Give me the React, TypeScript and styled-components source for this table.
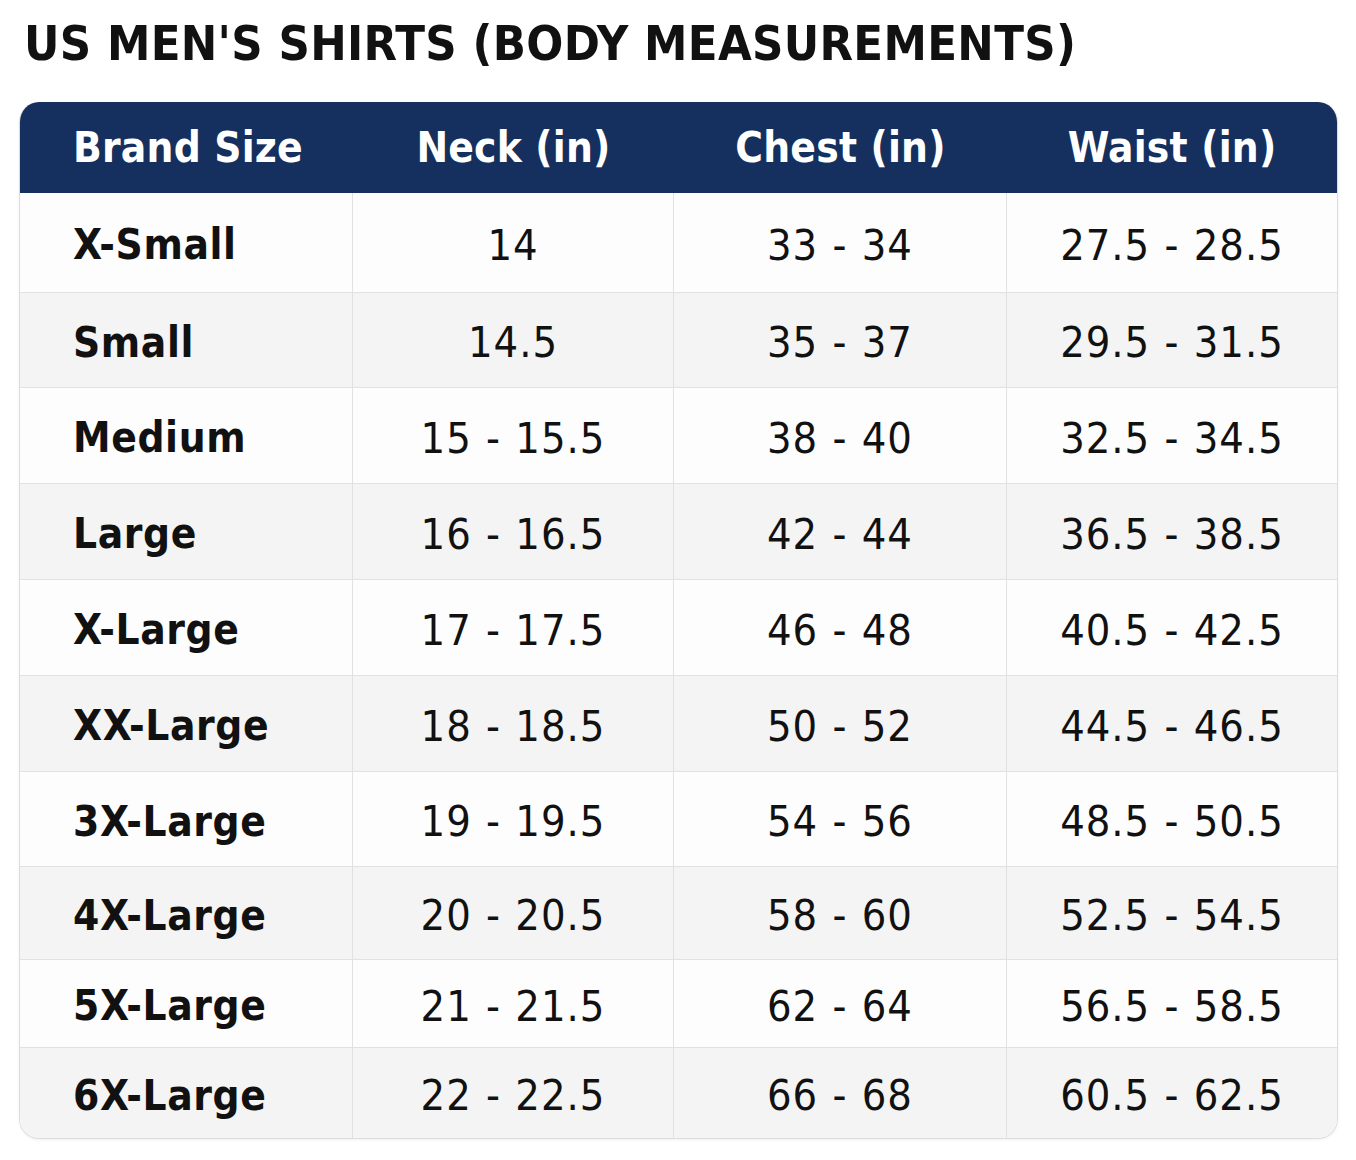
import React from "react";
import styled, { createGlobalStyle } from "styled-components";

const Global = createGlobalStyle`
  html, body { margin: 0; padding: 0; background: #ffffff; }
  body { font-family: "DejaVu Sans Condensed", "DejaVu Sans", sans-serif; font-stretch: condensed; }
`;

const Page = styled.div`
  width: 1356px;
  height: 1160px;
  box-sizing: border-box;
  padding: 14px 18px 0 19px;
  display: flex;
  flex-direction: column;
`;

const Title = styled.h1`
  margin: 0 0 0 5px;
  height: 88px;
  font-family: "DejaVu Sans Condensed", "DejaVu Sans", sans-serif;
  font-stretch: condensed;
  font-weight: 700;
  font-size: 48.5px;
  line-height: 58px;
  color: #111111;
  letter-spacing: 0.3px;
  white-space: nowrap;
`;

const Table = styled.div`
  width: 1319px;
  box-sizing: border-box;
  border: 1.5px solid #dddddd;
  border-top: none;
  border-radius: 20px;
  overflow: hidden;
  display: grid;
  grid-template-columns: 333px 321px 333px 1fr;
  grid-template-rows: 91px 100px 95px 96px 96px 96px 96px 95px 93px 88px 90px;
  box-shadow: 0 1px 3px rgba(0, 0, 0, 0.06);
`;

const HeadCell = styled.div<{ $first?: boolean }>`
  background: #15305e;
  color: #ffffff;
  display: flex;
  align-items: center;
  justify-content: ${(p) => (p.$first ? "flex-start" : "center")};
  padding-left: ${(p) => (p.$first ? "53px" : "0")};
  font-weight: 700;
  font-size: 42px;
  letter-spacing: 0.2px;
`;

const Cell = styled.div<{ $first?: boolean; $alt?: boolean; $last?: boolean; $bottom?: boolean }>`
  box-sizing: border-box;
  background: ${(p) => (p.$alt ? "#f4f4f4" : "#fdfdfd")};
  border-bottom: ${(p) => (p.$bottom ? "none" : "1.5px solid #e1e1e1")};
  border-right: ${(p) => (p.$last ? "none" : "1.5px solid #e1e1e1")};
  display: flex;
  align-items: center;
  justify-content: ${(p) => (p.$first ? "flex-start" : "center")};
  padding-left: ${(p) => (p.$first ? "53px" : "0")};
  padding-top: 4px;
  color: #111111;
  font-weight: ${(p) => (p.$first ? 700 : 400)};
  font-size: ${(p) => (p.$first ? "42px" : "43px")};
  letter-spacing: ${(p) => (p.$first ? "0.6px" : "1px")};
  word-spacing: ${(p) => (p.$first ? "0" : "1px")};
`;

const rows: [string, string, string, string][] = [
  ["X-Small", "14", "33 - 34", "27.5 - 28.5"],
  ["Small", "14.5", "35 - 37", "29.5 - 31.5"],
  ["Medium", "15 - 15.5", "38 - 40", "32.5 - 34.5"],
  ["Large", "16 - 16.5", "42 - 44", "36.5 - 38.5"],
  ["X-Large", "17 - 17.5", "46 - 48", "40.5 - 42.5"],
  ["XX-Large", "18 - 18.5", "50 - 52", "44.5 - 46.5"],
  ["3X-Large", "19 - 19.5", "54 - 56", "48.5 - 50.5"],
  ["4X-Large", "20 - 20.5", "58 - 60", "52.5 - 54.5"],
  ["5X-Large", "21 - 21.5", "62 - 64", "56.5 - 58.5"],
  ["6X-Large", "22 - 22.5", "66 - 68", "60.5 - 62.5"],
];

const heads = ["Brand Size", "Neck (in)", "Chest (in)", "Waist (in)"];

export default function App() {
  return (
    <>
      <Global />
      <Page>
        <Title>US MEN'S SHIRTS (BODY MEASUREMENTS)</Title>
        <Table>
          {heads.map((h, i) => (
            <HeadCell key={h} $first={i === 0}>
              {h}
            </HeadCell>
          ))}
          {rows.map((r, ri) =>
            r.map((v, ci) => (
              <Cell
                key={`${ri}-${ci}`}
                $first={ci === 0}
                $last={ci === 3}
                $alt={ri % 2 === 1}
                $bottom={ri === rows.length - 1}
              >
                {v}
              </Cell>
            ))
          )}
        </Table>
      </Page>
    </>
  );
}
